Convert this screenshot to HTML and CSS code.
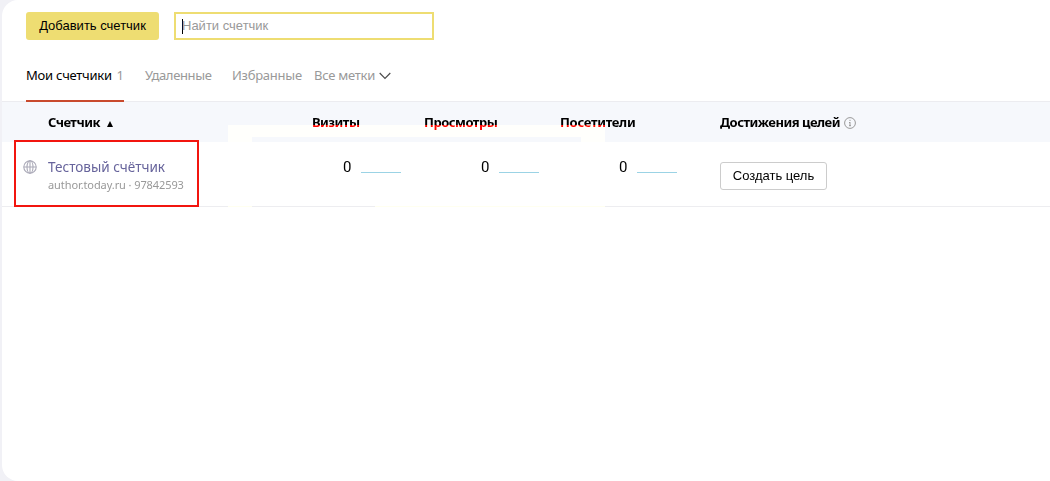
FILE: index.html
```html
<!DOCTYPE html>
<html lang="ru">
<head>
<meta charset="utf-8">
<title>Счетчики</title>
<link rel="stylesheet" href="styles.css">
</head>
<body>
<main class="page">
  <div class="toolbar">
    <button class="btn btn-primary">Добавить счетчик</button>
    <div class="search"><span class="caret"></span><span>Найти счетчик</span></div>
  </div>
  <nav class="tabs">
    <a class="tab active">Мои счетчики <span class="count">1</span></a>
    <a class="tab deleted">Удаленные</a>
    <a class="tab favorites">Избранные</a>
    <a class="tab labels">Все метки
      <svg width="12" height="8" viewBox="0 0 12 8" fill="none" stroke="#4c4c4c" stroke-width="1.2"><path d="M.7 1 6 6.3 11.3 1"/></svg>
    </a>
  </nav>
  <section class="table">
    <div class="row head">
      <div class="name">Счетчик <svg class="sort" width="6" height="6" viewBox="0 0 6 6"><path d="M3 0 6 6H0z"/></svg></div>
      <div class="visits">Визиты</div>
      <div class="views">Просмотры</div>
      <div class="users">Посетители</div>
      <div class="goals">Достижения целей
        <svg width="12" height="12" viewBox="0 0 12 12" fill="none" stroke="#999"><circle cx="6" cy="6" r="5.4"/><path d="M6 5v4M6 2.8V4M5 5.5h1M5 8.7h2"/></svg>
      </div>
    </div>
    <div class="row body">
      <svg class="globe" width="14" height="14" viewBox="0 0 14 14" fill="none" stroke="#aaa9b7" stroke-width="1.1"><circle cx="7" cy="7" r="6.2"/><ellipse cx="7" cy="7" rx="3" ry="6.2"/><path d="M7 .8v12.4M.8 7h12.4"/></svg>
      <div class="counter">
        <a class="title">Тестовый счётчик</a>
        <div class="meta">author.today.ru · 97842593</div>
      </div>
      <div class="metric">0<i class="spark"></i></div>
      <div class="metric">0<i class="spark"></i></div>
      <div class="metric">0<i class="spark"></i></div>
      <button class="btn btn-outline">Создать цель</button>
      <div class="highlight"></div>
    </div>
    <div class="tint green"><i class="top"></i><i class="left"></i><i class="right"></i><i class="bottom"></i></div>
    <div class="tint red"><i class="top"></i><i class="left"></i><i class="right"></i><i class="bottom"></i></div>
  </section>
</main>
</body>
</html>
```

FILE: styles.css
```css
* { box-sizing: border-box; }
body { margin: 0; height: 481px; overflow: hidden; background: #f1f1f6; font: 13px/18px "Noto Sans", sans-serif; color: #000; }
.page { height: 481px; margin-left: 2px; background: #fff; border-radius: 16px 0 0 16px; padding-top: 12px; }
.toolbar { display: flex; gap: 15px; padding-left: 24px; }
.btn { height: 28px; border-radius: 3px; font: 13px/18px "Liberation Sans", Arial, sans-serif; padding: 0; color: #000; white-space: nowrap; }
.btn-primary { width: 133px; border: 0; background: #eedd72; }
.search { display: flex; align-items: center; width: 260px; height: 28px; border: 2px solid #eedd72; padding-left: 6px; font-family: "Liberation Sans", Arial, sans-serif; color: #999; }
.caret { width: 1px; height: 15px; background: #000; margin-right: -1px; }
.tabs { display: flex; height: 62px; padding-left: 24px; border-bottom: 1px solid #ececf0; }
.tab { height: 62px; padding-top: 26px; color: #999; white-space: nowrap; letter-spacing: -.25px; }
.active { width: 98px; color: #000; border-bottom: 2px solid #c94a2d; display: flex; justify-content: space-between; }
.count { color: #999; letter-spacing: 0; }
.deleted { margin-left: 21px; width: 67px; letter-spacing: -.33px; }
.favorites { margin-left: 20px; width: 70px; }
.labels { margin-left: 12px; display: flex; gap: 4px; }
.labels svg { margin-top: 6px; }
.table { position: relative; isolation: isolate; background: #fff; }
.row { display: flex; }
.head { height: 40px; padding: 11px 0 0 46px; background: #f6f8fc; font-weight: bold; white-space: nowrap; letter-spacing: -.5px; }
.name { width: 264px; display: flex; gap: 7px; }
.sort { margin-top: 8px; }
.visits { width: 112px; }
.views { width: 136px; }
.users { width: 160px; letter-spacing: -.3px; }
.goals { display: flex; gap: 4px; }
.goals svg { margin-top: 4px; }
.body { position: relative; height: 65px; border-bottom: 1px solid #ededf0; padding-left: 21px; }
.globe { margin: 18px 11px 0 0; }
.counter { width: 295px; padding-top: 14px; white-space: nowrap; }
.title { display: block; font-size: 15px; line-height: 20px; color: #66639b; transform: scaleX(.903); transform-origin: left; }
.meta { font-size: 11px; line-height: 18px; color: #999; letter-spacing: -.09px; }
.metric { width: 138px; padding-top: 15px; display: flex; gap: 9.5px; font: 15px/20px Roboto, sans-serif; }
.spark { width: 40px; height: 1px; margin-top: 15px; background: #9bd3e5; }
.btn-outline { width: 107px; margin: 20px 0 0 -37px; border: 1px solid #ccc; background: #fff; }
.highlight { position: absolute; left: 12px; top: -2px; width: 185px; height: 67px; border: 2px solid #f2150f; }
.tint { position: absolute; inset: 0; pointer-events: none; }
.tint i { position: absolute; }
.green { mix-blend-mode: color-dodge; }
.green i { background: #001e00; }
.red { mix-blend-mode: lighten; }
.red i { background: #f00; }
.top { left: 226px; top: 23px; width: 377px; height: 12px; }
.left { left: 226px; top: 35px; width: 24px; height: 70px; }
.right { left: 579px; top: 35px; width: 24px; height: 70px; }
.bottom { left: 373px; top: 104px; width: 206px; height: 1px; }
```
